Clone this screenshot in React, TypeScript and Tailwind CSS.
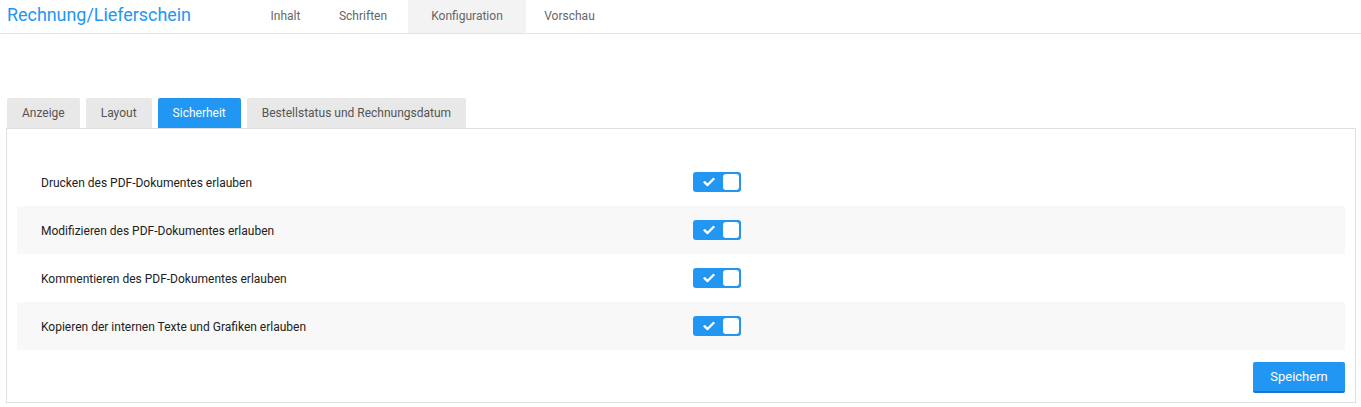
import React from "react";

const rows = [
  "Drucken des PDF-Dokumentes erlauben",
  "Modifizieren des PDF-Dokumentes erlauben",
  "Kommentieren des PDF-Dokumentes erlauben",
  "Kopieren der internen Texte und Grafiken erlauben",
];

function Toggle() {
  return (
    <div className="flex h-[20px] w-[48px] items-center justify-between rounded-[3px] bg-[#2196f3] pl-[10px] pr-[2px]">
      <svg width="12" height="10" viewBox="0 0 12 10">
        <path d="M1.5 5.2 L4.5 8 L10.5 2" fill="none" stroke="#fff" strokeWidth="2.4" strokeLinecap="round" strokeLinejoin="round" />
      </svg>
      <div className="h-[16px] w-[16px] rounded-[3px] bg-white" />
    </div>
  );
}

const nav = [
  { label: "Inhalt", w: "w-[65px]", active: false },
  { label: "Schriften", w: "w-[90px]", active: false },
  { label: "Konfiguration", w: "w-[118px]", active: true },
  { label: "Vorschau", w: "w-[87px]", active: false },
];

export default function App() {
  const tabs = ["Anzeige", "Layout", "Sicherheit", "Bestellstatus und Rechnungsdatum"];
  return (
    <div className="min-h-[407px] bg-white font-['Roboto',sans-serif] text-[#333]">
      <div className="flex h-[34px] items-stretch border-b border-[#e3e3e3]">
        <div className="w-[253px] pl-[7px] pt-[4px] text-[17.9px] leading-[22px] text-[#2196f3]">Rechnung/Lieferschein</div>
        <div className="flex">
          {nav.map((n) => (
            <div
              key={n.label}
              className={`flex items-center justify-center pb-[2px] text-[12px] text-[#666] ${n.w} ${n.active ? "bg-[#f3f3f3]" : ""}`}
            >
              {n.label}
            </div>
          ))}
        </div>
      </div>
      <div className="px-[6px] pt-[64px]">
        <div className="flex gap-[6px] pl-px">
          {tabs.map((t) => (
            <div
              key={t}
              className={`flex h-[30px] items-center rounded-t-[2px] px-[15px] text-[12px] ${t === "Sicherheit" ? "bg-[#2196f3] text-white" : "bg-[#e8e8e8] text-[#555]"}`}
            >
              {t}
            </div>
          ))}
        </div>
        <div className="h-[275px] w-[1350px] border border-[#e0e0e0] px-[10px] pt-[29px]">
          {rows.map((r, i) => (
            <div key={r} className={`flex h-[48px] items-center pl-[24px] ${i % 2 === 1 ? "bg-[#f8f8f8]" : ""}`}>
              <div className="w-[652px] pt-[2px] text-[12px] text-[#222]">{r}</div>
              <Toggle />
            </div>
          ))}
          <div className="mt-[12px] flex justify-end">
            <button className="h-[31px] w-[92px] rounded-[2px] border-b-2 border-[#1976d2] bg-[#2196f3] text-[13px] text-white">
              Speichern
            </button>
          </div>
        </div>
      </div>
    </div>
  );
}
